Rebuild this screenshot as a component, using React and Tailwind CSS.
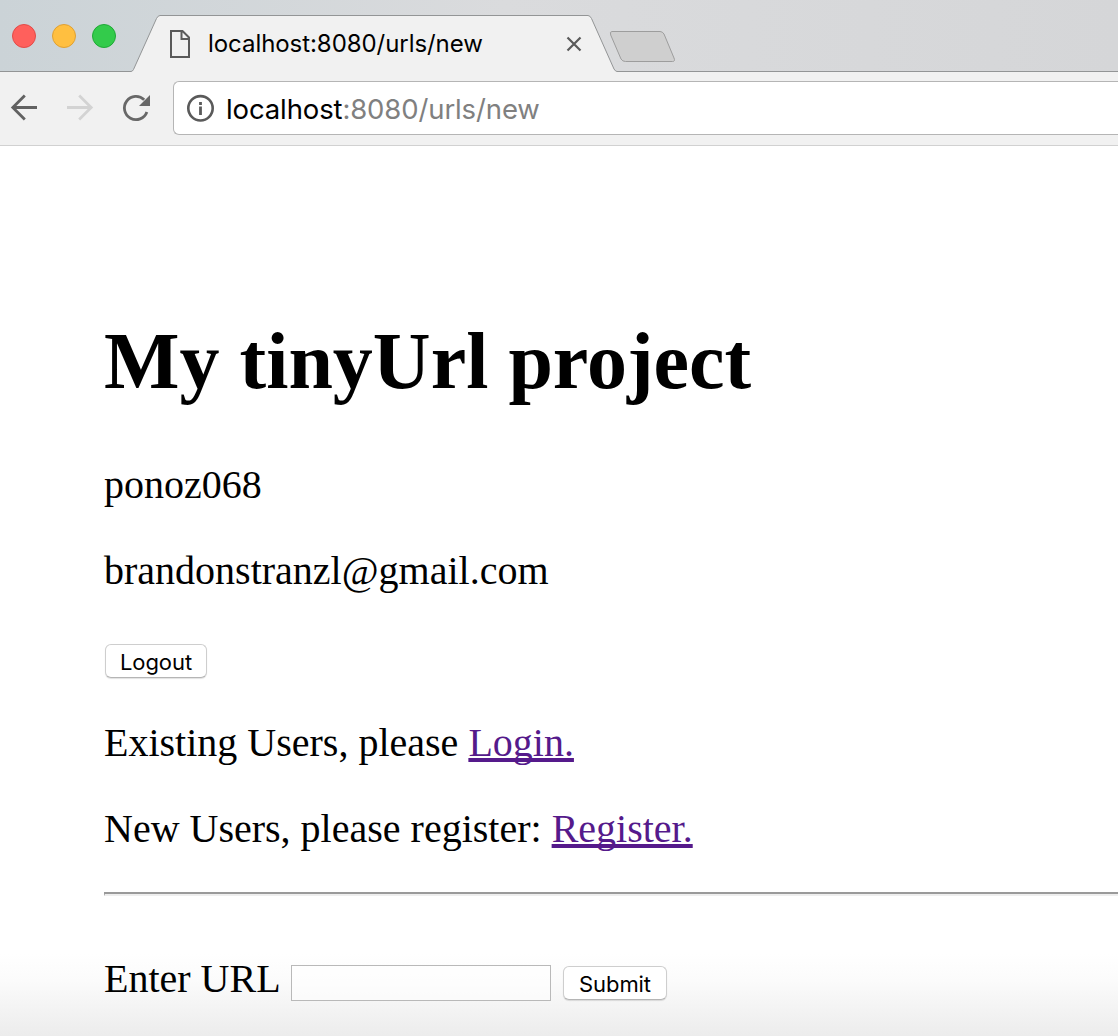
import React from "react";

function TrafficLights() {
  return (
    <div className="flex h-[72px] items-center gap-4 pl-3">
      <span className="size-6 rounded-full border border-[#e24b48] bg-[#ff605c]" />
      <span className="size-6 rounded-full border border-[#dfa033] bg-[#ffbf40]" />
      <span className="size-6 rounded-full border border-[#1fa936] bg-[#33cb4b]" />
    </div>
  );
}

function TabStrip() {
  return (
    <div className="relative h-[72px] bg-linear-to-r from-[#cbd3d7] via-[#dadbdd] via-45% to-[#d5d6d8]">
      <svg className="absolute inset-0" width="1118" height="72" fill="none">
        <path d="M0 71.5H131Q132.5 71.500 133.500 69.500L156.500 18.500Q158 15.500 160 15.500H588Q590 15.500 591.500 18.500L614 69Q615.500 71.500 617 71.500H1118V73H0Z" fill="#f1f1f1" />
        <path d="M0 71.5H131Q132.500 71.500 133.500 69.500L156.500 18.500Q158 15.500 160 15.500H588Q590 15.500 591.500 18.500L614 69Q615.500 71.500 617 71.500H1118" stroke="#939596" />
        <path d="M612 31.500H660Q662.500 31.500 664 34L674 58Q675.500 61.500 672.500 61.500H625.500Q622.500 61.500 621 59L610.700 35Q609.500 31.500 612 31.500Z" fill="#cfcfcf" stroke="#9d9d9d" />
        <path d="M171 31H182.500L189 37.500V57H171ZM181.500 31V39H189" stroke="#5a5a5a" strokeWidth="2" />
        <path d="M567.500 37.500L580.500 50.500M580.500 37.500L567.500 50.500" stroke="#5a5a5a" strokeWidth="2.200" />
      </svg>
      <div className="relative flex h-11 items-start">
        <div className="w-[208px]"><TrafficLights /></div>
        <span className="mt-7 whitespace-nowrap font-['Inter',sans-serif] text-[24px] leading-8 tracking-[-0.060px] text-black">localhost:8080/urls/new</span>
      </div>
    </div>
  );
}

function Toolbar() {
  return (
    <div className="flex h-[74px] border-b border-[#d1d1d1] bg-[#f1f1f1] pt-[9px]">
      <svg className="h-[54px] w-[173px] shrink-0" viewBox="0 81 173 54" fill="none" strokeWidth="2.800">
        <path d="M37 107.500H13M24.800 95.500L12.800 107.500L24.800 119.500" stroke="#626262" />
        <path d="M67 107.500H91M79.200 95.500L91.200 107.500L79.200 119.500" stroke="#d3d3d3" />
        <path d="M144.200 99.800A11.600 11.600 0 1 0 146.900 112" stroke="#686868" />
        <path d="M150 95V106H139Z" fill="#686868" />
      </svg>
      <div className="flex h-[54px] flex-1 items-center overflow-hidden rounded-l-md border border-r-0 border-[#b5b5b5] bg-white pl-3">
        <svg className="mr-3 size-7 shrink-0" viewBox="0 0 28 28" fill="none">
          <circle cx="14.500" cy="14.300" r="12.200" stroke="#5a5a5a" strokeWidth="2.600" />
          <path d="M14.500 12.500V21M14.500 8V11" stroke="#5a5a5a" strokeWidth="2.800" />
        </svg>
        <span className="mt-[2px] whitespace-nowrap font-['Inter',sans-serif] text-[27.500px] leading-8 tracking-[-0.120px] text-[#808080]">
          <span className="text-black">localhost</span>:8080/urls/new
        </span>
      </div>
    </div>
  );
}

function Button({ children, width }) {
  return (
    <button className={`${width} h-[34px] rounded-md border border-[#cecece] border-b-[#b5b5b5] bg-white pt-px font-['Inter',sans-serif] text-[22px] leading-8 tracking-[-0.060px] text-black shadow-[0_1px_1px_rgba(0,0,0,0.120)]`}>
      {children}
    </button>
  );
}

function Link({ children }) {
  return (
    <a href="#" className="text-[#551a8b] underline decoration-4 underline-offset-[2px] [text-decoration-skip-ink:none]">
      {children}
    </a>
  );
}

export default function App() {
  return (
    <div className="h-[1036px] w-[1118px] overflow-hidden bg-white">
      <TabStrip />
      <Toolbar />
      <main className="h-[890px] bg-[linear-gradient(to_bottom,#fff_0,#fff_808px,#fbfbfb_835px,#ececec_890px)] pl-[104px] pt-[169px] font-['Liberation_Serif',serif] text-[40px] leading-[46px] text-black">
        <h1 className="mb-[55px] text-[80px] font-bold leading-[92px]">My tinyUrl project</h1>
        <p className="mb-10">ponoz068</p>
        <p className="mb-10">brandonstranzl@gmail.com</p>
        <div className="mb-10 flex h-[46px] items-center pl-px pt-[7px]">
          <Button width="w-[102px]">Logout</Button>
        </div>
        <p className="mb-10">Existing Users, please <Link>Login.</Link></p>
        <p className="mb-10">New Users, please register: <Link>Register.</Link></p>
        <hr className="h-1 border-t-2 border-b-2 border-l border-t-[#9a9a9a] border-b-[#eeeeee] border-l-[#9a9a9a]" />
        <form className="mt-[60px] flex" onSubmit={(e) => e.preventDefault()}>
          <label htmlFor="url" className="w-[187px]">Enter URL</label>
          <input id="url" className="mt-[9px] h-9 w-[260px] border border-[#b9b9b9] bg-white/50" />
          <div className="ml-3 mt-[10px] flex"><Button width="w-[104px]">Submit</Button></div>
        </form>
      </main>
    </div>
  );
}
